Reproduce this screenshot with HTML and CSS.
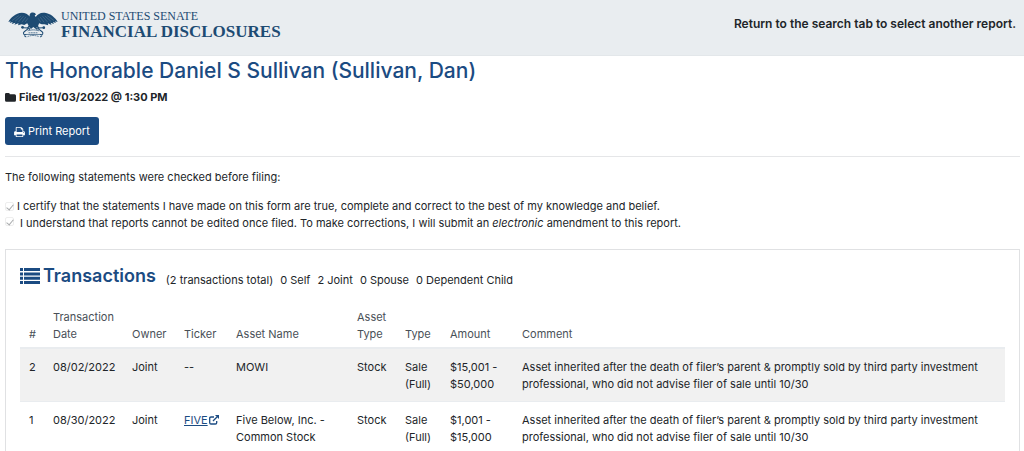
FILE: index.html
```html
<!DOCTYPE html>
<html lang="en">
<head>
<meta charset="utf-8">
<title>Financial Disclosures - Periodic Transaction Report</title>
<link rel="stylesheet" href="styles.css">
</head>
<body>
<header class="masthead">
  <div class="brand">
    <svg class="brand-eagle" viewBox="0 0 148 76" aria-hidden="true">
      <g fill="#1d4b73">
        <path d="M1 29C8 17 22 3 41 2C51 2 59 6 64 13C63 6 66 1 72 1C77 0 81 3 83 7L79 9C80 11 81 13 82 14C88 5 98 0 109 2C126 4 140 17 147 29L139 27L142 32L133 29L136 35L126 31L129 38L118 33L119 39L108 36L100 36L92 33L89 41L94 48L84 44L82 50L75 44L68 50L66 44L55 48L61 40L57 33L48 38L40 36L30 39L31 33L19 37L22 31L11 35L14 29L5 32L8 27Z"/>
      </g>
      <g fill="none" stroke="#7f97ab" stroke-width="1">
        <path d="M12 25L32 10M21 27L39 11M31 29L46 12M41 30L53 14M51 29L59 18M136 25L116 10M127 27L109 11M117 29L102 12M107 30L95 14M97 29L89 18"/>
      </g>
      <g fill="none" stroke="#1d4b73" stroke-width="3" stroke-linecap="round">
        <path d="M44 46L62 47M105 46L87 47M61 48L48 58C43 62 47 69 53 66M88 48L101 58C106 62 102 69 96 66"/>
        <path d="M59 55Q75 50 91 55M54 66H95" stroke-dasharray="5 2" stroke-width="2"/>
        <path d="M62 61H87M59 72C69 68 80 68 91 72" stroke-dasharray="3 4" stroke-width="2"/>
        <path d="M49 70L53 73M100 70L96 73M67 44L63 51M82 44L86 51"/>
      </g>
      <g fill="#1d4b73"><circle cx="43" cy="45" r="4"/><circle cx="106" cy="46" r="4"/></g>
    </svg>
    <div class="brand-text">
      <span class="brand-top">UNITED STATES SENATE</span>
      <span class="brand-main">FINANCIAL DISCLOSURES</span>
    </div>
  </div>
  <strong class="masthead-note">Return to the search tab to select another report.</strong>
</header>

<main class="report">
  <h1 class="filer">The Honorable Daniel S Sullivan (Sullivan, Dan)</h1>
  <p class="filed">
    <svg class="icon-folder" viewBox="0 0 11 9" aria-hidden="true"><path fill="currentColor" d="M0 1.3Q0 0 1.3 0H3.5Q4.8 0 4.8 1.3H9.5Q11 1.3 11 2.8V7.2Q11 8.7 9.5 8.7H1.5Q0 8.7 0 7.2Z"/></svg>
    Filed 11/03/2022 @ 1:30 PM
  </p>
  <button class="print" type="button">
    <svg class="icon-print" viewBox="0 0 1664 1536" aria-hidden="true"><path fill="currentColor" fill-rule="evenodd" d="M384 1408h896v-256H384zM384 768h896V384h-160q-40 0-68-28t-28-68V128H384zM1536 832q0-26-19-45t-45-19-45 19-19 45 19 45 45 19 45-19 19-45zM1664 832v416q0 13-9.500 22.500t-22.500 9.500h-224v160q0 40-28 68t-68 28H352q-40 0-68-28t-28-68v-160H32q-13 0-22.500-9.500T0 1248V832q0-79 56.500-135.500T192 640h64V96q0-40 28-68t68-28h672q40 0 88 20t76 48l152 152q28 28 48 76t20 88v256h64q79 0 135.500 56.500T1664 832z"/></svg>
    Print Report
  </button>

  <section class="statements">
    <p class="statements-intro">The following statements were checked before filing:</p>
    <div class="statement">
      <input class="tick" type="checkbox" id="certify" checked disabled>
      <label for="certify">I certify that the statements I have made on this form are true, complete and correct to the best of my knowledge and belief.</label>
    </div>
    <div class="statement statement-wide">
      <input class="tick" type="checkbox" id="understand" checked disabled>
      <label for="understand">I understand that reports cannot be edited once filed. To make corrections, I will submit an <em>electronic</em> amendment to this report.</label>
    </div>
  </section>

  <section class="card">
    <div class="card-head">
      <h2 class="card-title">
        <svg class="icon-list" viewBox="0 0 20 16" aria-hidden="true"><path fill="currentColor" d="M0 0H3V3H0ZM4 0H20V3H4ZM0 4.400H3V7.400H0ZM4 4.400H20V7.400H4ZM0 8.700H3V11.700H0ZM4 8.700H20V11.700H4ZM0 13H3V16H0ZM4 13H20V16H4Z"/></svg>
        Transactions
      </h2>
      <p class="totals"><span>(2 transactions total)</span><span>0 Self</span><span>2 Joint</span><span>0 Spouse</span><span>0 Dependent Child</span></p>
    </div>
    <table class="transactions">
      <colgroup>
        <col class="col-num"><col class="col-date"><col class="col-owner"><col class="col-ticker"><col class="col-name"><col class="col-asset"><col class="col-type"><col class="col-amount"><col>
      </colgroup>
      <thead>
        <tr><th>#</th><th>Transaction Date</th><th>Owner</th><th>Ticker</th><th>Asset Name</th><th>Asset Type</th><th>Type</th><th>Amount</th><th>Comment</th></tr>
      </thead>
      <tbody>
        <tr><td>2</td><td>08/02/2022</td><td>Joint</td><td>--</td><td>MOWI</td><td>Stock</td><td>Sale (Full)</td><td>$15,001 - $50,000</td><td>Asset inherited after the death of filer’s parent &amp; promptly sold by third party investment professional, who did not advise filer of sale until 10/30</td></tr>
        <tr><td>1</td><td>08/30/2022</td><td>Joint</td><td><a class="ticker" href="#five">FIVE<svg class="icon-external" viewBox="0 0 10 10" aria-hidden="true"><path fill="none" stroke="currentColor" stroke-width="1.3" d="M5 2H2Q.7 2 .7 3.300V7.700Q.7 9 2 9H6.400Q7.700 9 7.700 7.700V6M4 6L8 2"/><path fill="currentColor" d="M6 0H10V4L8.700 2.800L7.200 1.300Z"/></svg></a></td><td>Five Below, Inc. - Common Stock</td><td>Stock</td><td>Sale (Full)</td><td>$1,001 - $15,000</td><td>Asset inherited after the death of filer’s parent &amp; promptly sold by third party investment professional, who did not advise filer of sale until 10/30</td></tr>
      </tbody>
    </table>
  </section>
</main>
</body>
</html>
```

FILE: styles.css
```css
* { box-sizing: border-box; }
body {
  margin: 0;
  background: #fff;
  color: #212529;
  font: 11px/17px Inter, "Liberation Sans", sans-serif;
}
h1, h2, p { margin: 0; }

.masthead {
  display: flex;
  justify-content: space-between;
  align-items: flex-start;
  padding: 10px 8px 14px;
  background: #e9edf0;
  border-bottom: 1px solid #e3e7ea;
}
.brand { display: flex; gap: 3px; }
.brand-eagle { width: 50px; height: 28px; margin-top: 1px; }
.brand-text {
  display: flex;
  flex-direction: column;
  color: #1d4b73;
  font-family: "Liberation Serif", serif;
  white-space: nowrap;
}
.brand-top { font-size: 12px; line-height: 13px; }
.brand-main { font-size: 17px; font-weight: bold; line-height: 18px; }
.masthead-note {
  padding-top: 5px;
  font-size: 12px;
  font-weight: 600;
}

.report { padding: 0 4px 0 5px; }
.filer {
  color: #1b4b82;
  font-size: 21px;
  font-weight: 500;
  line-height: 29px;
}
.filed {
  display: flex;
  align-items: center;
  gap: 3px;
  margin-top: 4px;
  font-weight: bold;
}
.icon-folder { width: 11px; height: 9px; }
.print {
  display: flex;
  align-items: center;
  gap: 3px;
  margin-top: 11px;
  padding: 6px 9px 5px;
  border: 0;
  border-radius: 3px;
  background: #1b4b82;
  color: #fff;
  font: inherit;
}
.icon-print { width: 11px; height: 10px; }

.statements {
  margin-top: 11px;
  padding-top: 12px;
  border-top: 1px solid #e5e6e8;
}
.statements-intro { margin-bottom: 12px; }
.statement { display: flex; align-items: center; gap: 3px; }
.statement-wide { gap: 6px; }
.tick {
  appearance: none;
  display: grid;
  place-items: center;
  width: 9px;
  height: 9px;
  margin: 0;
  border: 1px solid #eeeeee;
  border-radius: 2px;
}
.statement-wide .tick { margin-bottom: 4px; }
.tick::before {
  content: "";
  width: 3px;
  height: 6px;
  border: solid #a9abad;
  border-width: 0 1px 1px 0;
  transform: rotate(40deg);
}

.card {
  margin-top: 17px;
  padding: 13px 14px;
  border: 1px solid #e0e1e3;
}
.card-head { display: flex; align-items: baseline; gap: 10px; }
.card-title {
  display: flex;
  align-items: center;
  gap: 3px;
  color: #1b4b82;
  font-size: 18px;
  font-weight: 600;
  line-height: 26px;
}
.icon-list { width: 20px; height: 16px; }
.totals { display: flex; gap: 7px; }

.transactions {
  width: 100%;
  margin-top: 10px;
  border-collapse: collapse;
  table-layout: fixed;
}
.col-num { width: 24px; }
.col-date { width: 79px; }
.col-owner, .col-ticker { width: 52px; }
.col-name { width: 121px; }
.col-asset { width: 48px; }
.col-type { width: 45px; }
.col-amount { width: 72px; }
.transactions th, .transactions td {
  padding: 10px 0 8px 9px;
  text-align: left;
  vertical-align: top;
}
.transactions td:nth-child(8) { padding-right: 10px; }
.transactions th {
  padding-bottom: 4px;
  border-bottom: 2px solid #e9ecef;
  color: #495057;
  font-weight: normal;
  vertical-align: bottom;
}
.transactions td { border-bottom: 1px solid #e9ecef; }
.transactions tbody tr:nth-child(odd) { background: #f1f1f1; }
.ticker { color: #1b4b82; }
.icon-external { width: 10px; height: 10px; margin-left: 1px; vertical-align: -1px; }
```
